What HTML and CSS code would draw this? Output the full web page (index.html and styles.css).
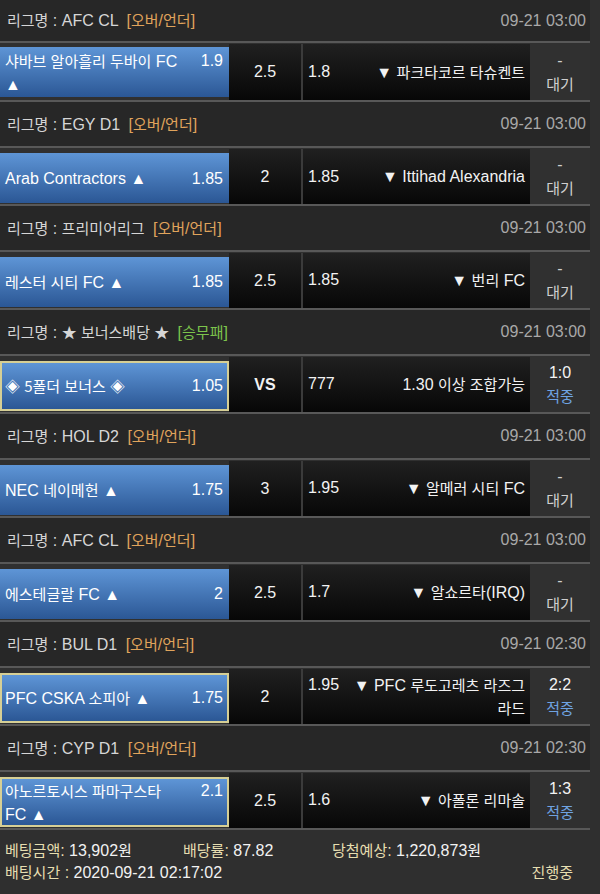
FILE: index.html
```html
<!DOCTYPE html>
<html lang="ko">
<head>
    <meta charset="UTF-8">
    <meta name="viewport" content="width=device-width, initial-scale=1.0">
    <title>배팅내역</title>
    <link rel="stylesheet" href="styles.css">
</head>
<body>

<div class="list">
    <div class="block">
        <div class="league">
            <span><span class="k">리그명</span> : AFC CL <span class="tag ou">[<span class="k">오버</span>/<span class="k">언더</span>]</span></span>
            <span class="date">09-21 03:00</span>
        </div>
        <div class="match">
            <div class="home"><div><span class="odd">1.9</span><span class="k">샤바브 알아흘리 두바이</span> FC ▲</div></div>
            <div class="line">2.5</div>
            <div class="away"><div><span class="odd">1.8</span>▼ <span class="k">파크타코르 타슈켄트</span></div></div>
            <div class="state">-<br><span class="k">대기</span></div>
        </div>
    </div>

    <div class="block">
        <div class="league">
            <span><span class="k">리그명</span> : EGY D1 <span class="tag ou">[<span class="k">오버</span>/<span class="k">언더</span>]</span></span>
            <span class="date">09-21 03:00</span>
        </div>
        <div class="match">
            <div class="home"><div><span class="odd">1.85</span>Arab Contractors ▲</div></div>
            <div class="line">2</div>
            <div class="away"><div><span class="odd">1.85</span>▼ Ittihad Alexandria</div></div>
            <div class="state">-<br><span class="k">대기</span></div>
        </div>
    </div>

    <div class="block">
        <div class="league">
            <span><span class="k">리그명</span> : <span class="k">프리미어리그</span> <span class="tag ou">[<span class="k">오버</span>/<span class="k">언더</span>]</span></span>
            <span class="date">09-21 03:00</span>
        </div>
        <div class="match">
            <div class="home"><div><span class="odd">1.85</span><span class="k">레스터 시티</span> FC ▲</div></div>
            <div class="line">2.5</div>
            <div class="away"><div><span class="odd">1.85</span>▼ <span class="k">번리</span> FC</div></div>
            <div class="state">-<br><span class="k">대기</span></div>
        </div>
    </div>

    <div class="block">
        <div class="league">
            <span><span class="k">리그명</span> : <span class="k">★ 보너스배당 ★</span> <span class="tag wdl">[<span class="k">승무패</span>]</span></span>
            <span class="date">09-21 03:00</span>
        </div>
        <div class="match">
            <div class="home hit"><div><span class="odd">1.05</span><span class="k">◈ 5폴더 보너스 ◈</span></div></div>
            <div class="line vs">VS</div>
            <div class="away"><div><span class="odd">777</span>1.30 <span class="k">이상 조합가능</span></div></div>
            <div class="state"><span class="score">1:0</span><span class="k win">적중</span></div>
        </div>
    </div>

    <div class="block">
        <div class="league">
            <span><span class="k">리그명</span> : HOL D2 <span class="tag ou">[<span class="k">오버</span>/<span class="k">언더</span>]</span></span>
            <span class="date">09-21 03:00</span>
        </div>
        <div class="match">
            <div class="home"><div><span class="odd">1.75</span>NEC <span class="k">네이메헌</span> ▲</div></div>
            <div class="line">3</div>
            <div class="away"><div><span class="odd">1.95</span>▼ <span class="k">알메러 시티</span> FC</div></div>
            <div class="state">-<br><span class="k">대기</span></div>
        </div>
    </div>

    <div class="block">
        <div class="league">
            <span><span class="k">리그명</span> : AFC CL <span class="tag ou">[<span class="k">오버</span>/<span class="k">언더</span>]</span></span>
            <span class="date">09-21 03:00</span>
        </div>
        <div class="match">
            <div class="home"><div><span class="odd">2</span><span class="k">에스테글랄</span> FC ▲</div></div>
            <div class="line">2.5</div>
            <div class="away"><div><span class="odd">1.7</span>▼ <span class="k">알쇼르타</span>(IRQ)</div></div>
            <div class="state">-<br><span class="k">대기</span></div>
        </div>
    </div>

    <div class="block">
        <div class="league">
            <span><span class="k">리그명</span> : BUL D1 <span class="tag ou">[<span class="k">오버</span>/<span class="k">언더</span>]</span></span>
            <span class="date">09-21 02:30</span>
        </div>
        <div class="match">
            <div class="home hit"><div><span class="odd">1.75</span>PFC CSKA <span class="k">소피아</span> ▲</div></div>
            <div class="line">2</div>
            <div class="away"><div><span class="odd">1.95</span>▼ PFC <span class="k">루도고레츠 라즈그라드</span></div></div>
            <div class="state"><span class="score">2:2</span><span class="k win">적중</span></div>
        </div>
    </div>

    <div class="block">
        <div class="league">
            <span><span class="k">리그명</span> : CYP D1 <span class="tag ou">[<span class="k">오버</span>/<span class="k">언더</span>]</span></span>
            <span class="date">09-21 02:30</span>
        </div>
        <div class="match">
            <div class="home hit"><div><span class="odd">2.1</span><span class="k">아노르토시스 파마구스타</span> FC ▲</div></div>
            <div class="line">2.5</div>
            <div class="away"><div><span class="odd">1.6</span>▼ <span class="k">아폴론 리마솔</span></div></div>
            <div class="state"><span class="score">1:3</span><span class="k win">적중</span></div>
        </div>
    </div>

    <div class="summary">
        <div><span class="label"><span class="k">베팅금액</span>:</span> 13,902<span class="k">원</span></div>
        <div><span class="label"><span class="k">배당률</span>:</span> 87.82</div>
        <div><span class="label"><span class="k">당첨예상</span>:</span> 1,220,873<span class="k">원</span></div>
        <div class="wide"><span class="label"><span class="k">배팅시간</span> :</span> 2020-09-21 02:17:02</div>
        <div class="status"><span class="k">진행중</span></div>
    </div>
</div>

</body>
</html>
```

FILE: styles.css
```css
body {
    margin: 0;
    background-color: #2f2f2f;
    color: #f2f2f2;
    font-family: "Liberation Sans", Arial, "Noto Sans CJK KR", sans-serif;
    font-size: 16px;
    line-height: 22px;
}
.k {
    font-family: "Noto Sans CJK KR", "Liberation Sans", sans-serif;
    font-size: 15px;
}
.list {
    width: 590px;
}
.league {
    height: 44px;
    display: flex;
    align-items: center;
    justify-content: space-between;
    padding: 0 4px 0 7px;
    background-color: #272727;
    border-bottom: 2px solid #585858;
    color: #d6d6d6;
}
.block:first-child .league {
    height: 41px;
}
.tag {
    margin-left: 4px;
}
.tag.ou {
    color: #e0a45c;
}
.tag.wdl {
    color: #7cc44c;
}
.date {
    color: #a9a9a9;
}
.match {
    display: flex;
    height: 57px;
    border-bottom: 2px solid #585858;
    background-color: #303030;
}
.block:last-of-type .match {
    border-bottom: none;
}
.block:not(:first-child) .match {
    height: 56px;
}
.home {
    width: 229px;
    height: 50px;
    margin-top: 4px;
    display: flex;
    align-items: center;
    padding: 0 6px 0 5px;
    box-sizing: border-box;
    background: linear-gradient(#5e95d6, #2b5795);
    color: #fff;
    line-height: 23px;
}
.block:not(:first-child) .home {
    margin-top: 5px;
}
.home.hit {
    border: 2px solid #d6cf95;
    padding: 0 4px 0 3px;
}
.home > div,
.away > div {
    width: 100%;
}
.home .odd {
    float: right;
    margin-left: 20px;
}
.line,
.away {
    margin-top: 1px;
    background: linear-gradient(#202020, #070707);
}
.line {
    width: 72px;
    display: flex;
    align-items: center;
    justify-content: center;
    border-right: 2px solid #3b3b3b;
}
.line.vs {
    font-weight: bold;
}
.away {
    width: 227px;
    display: flex;
    align-items: center;
    padding: 0 5px;
    box-sizing: border-box;
    text-align: right;
}
.away .odd {
    float: left;
    margin-right: 12px;
}
.state {
    width: 60px;
    display: flex;
    flex-direction: column;
    justify-content: center;
    align-items: center;
    line-height: 23px;
    color: #cfcfcf;
}
.state .score {
    color: #f4f4f4;
}
.state .win {
    color: #6fa3e2;
}
.summary {
    display: grid;
    grid-template-columns: 178px 149px 1fr;
    padding: 9px 17px 0 5px;
    line-height: 21px;
    color: #f2f2f2;
}
.summary .label,
.summary .status {
    color: #e6deb0;
}
.summary .wide {
    grid-column: 1 / 3;
}
.summary .status {
    justify-self: end;
}
```
